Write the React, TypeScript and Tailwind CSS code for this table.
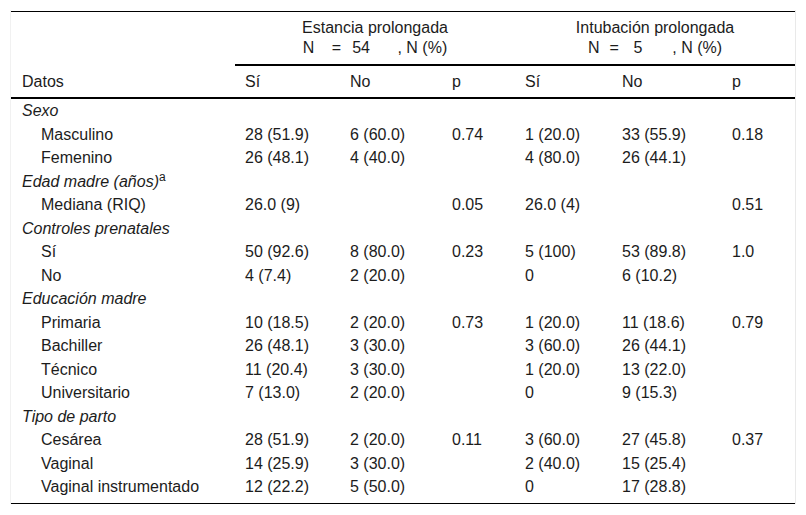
import React from "react";

type Row =
  | { kind: "cat"; label: string; sup?: string }
  | { kind: "data"; label: string; v: [string, string, string, string, string, string] };

const rows: Row[] = [
  { kind: "cat", label: "Sexo" },
  { kind: "data", label: "Masculino", v: ["28 (51.9)", "6 (60.0)", "0.74", "1 (20.0)", "33 (55.9)", "0.18"] },
  { kind: "data", label: "Femenino", v: ["26 (48.1)", "4 (40.0)", "", "4 (80.0)", "26 (44.1)", ""] },
  { kind: "cat", label: "Edad madre (años)", sup: "a" },
  { kind: "data", label: "Mediana (RIQ)", v: ["26.0 (9)", "", "0.05", "26.0 (4)", "", "0.51"] },
  { kind: "cat", label: "Controles prenatales" },
  { kind: "data", label: "Sí", v: ["50 (92.6)", "8 (80.0)", "0.23", "5 (100)", "53 (89.8)", "1.0"] },
  { kind: "data", label: "No", v: ["4 (7.4)", "2 (20.0)", "", "0", "6 (10.2)", ""] },
  { kind: "cat", label: "Educación madre" },
  { kind: "data", label: "Primaria", v: ["10 (18.5)", "2 (20.0)", "0.73", "1 (20.0)", "11 (18.6)", "0.79"] },
  { kind: "data", label: "Bachiller", v: ["26 (48.1)", "3 (30.0)", "", "3 (60.0)", "26 (44.1)", ""] },
  { kind: "data", label: "Técnico", v: ["11 (20.4)", "3 (30.0)", "", "1 (20.0)", "13 (22.0)", ""] },
  { kind: "data", label: "Universitario", v: ["7 (13.0)", "2 (20.0)", "", "0", "9 (15.3)", ""] },
  { kind: "cat", label: "Tipo de parto" },
  { kind: "data", label: "Cesárea", v: ["28 (51.9)", "2 (20.0)", "0.11", "3 (60.0)", "27 (45.8)", "0.37"] },
  { kind: "data", label: "Vaginal", v: ["14 (25.9)", "3 (30.0)", "", "2 (40.0)", "15 (25.4)", ""] },
  { kind: "data", label: "Vaginal instrumentado", v: ["12 (22.2)", "5 (50.0)", "", "0", "17 (28.8)", ""] },
];

export default function App() {
  const last = rows.length - 1;
  return (
    <div
      className="w-[806px] h-[515px] bg-white pt-[10px] pl-[10px] text-[16px] text-[#1c1c1c]"
      style={{ fontFamily: '"Liberation Sans", Arial, sans-serif' }}
    >
      <div className="w-[786px] border-l border-r border-l-[#f1f1f1] border-r-[#e9e9e9] pt-[1px]">
        <table className="w-[784px] table-fixed border-separate border-spacing-0 border-t border-b border-black">
          <colgroup>
            <col className="w-[224px]" />
            <col className="w-[105px]" />
            <col className="w-[102px]" />
            <col className="w-[73px]" />
            <col className="w-[97px]" />
            <col className="w-[110px]" />
            <col className="w-[73px]" />
          </colgroup>
          <thead>
            <tr>
              <th className="p-0"></th>
              <th
                colSpan={3}
                className="font-normal text-center pt-[6px] pb-[6px] leading-[20px] border-b-2 border-black"
              >
                <div>Estancia prolongada</div>
                <div className="whitespace-nowrap">
                  <span>N</span>
                  <span className="ml-[17.5px]">=</span>
                  <span className="ml-[11px]">54</span>
                  <span className="ml-[27.5px]">, N (%)</span>
                </div>
              </th>
              <th
                colSpan={3}
                className="font-normal text-center pt-[6px] pb-[6px] leading-[20px] border-b-2 border-black"
              >
                <div>Intubación prolongada</div>
                <div className="whitespace-nowrap">
                  <span>N</span>
                  <span className="ml-[10px]">=</span>
                  <span className="ml-[14.5px]">5</span>
                  <span className="ml-[30px]">, N (%)</span>
                </div>
              </th>
            </tr>
            <tr>
              {["Datos", "Sí", "No", "p", "Sí", "No", "p"].map((h, i) => (
                <th
                  key={i}
                  className={`font-normal text-left h-[33px] align-middle leading-[20px] border-b-2 border-black ${
                    i === 0 ? "pl-[11px]" : "pl-[10px]"
                  }`}
                >
                  {h}
                </th>
              ))}
            </tr>
          </thead>
          <tbody>
            {rows.map((r, idx) => {
              const pb = idx === last ? "pb-[4px]" : "pb-0";
              if (r.kind === "cat") {
                return (
                  <tr key={idx}>
                    <td colSpan={7} className={`pl-[11px] italic leading-[23.5px] align-top whitespace-nowrap ${pb}`}>
                      {r.label}
                      {r.sup && <sup className="not-italic text-[12px]">{r.sup}</sup>}
                    </td>
                  </tr>
                );
              }
              return (
                <tr key={idx}>
                  <td className={`pl-[30px] leading-[23.5px] align-top whitespace-nowrap ${pb}`}>{r.label}</td>
                  {r.v.map((c, j) => (
                    <td key={j} className={`pl-[10px] leading-[23.5px] align-top whitespace-nowrap ${pb}`}>
                      {c}
                    </td>
                  ))}
                </tr>
              );
            })}
          </tbody>
        </table>
      </div>
    </div>
  );
}
